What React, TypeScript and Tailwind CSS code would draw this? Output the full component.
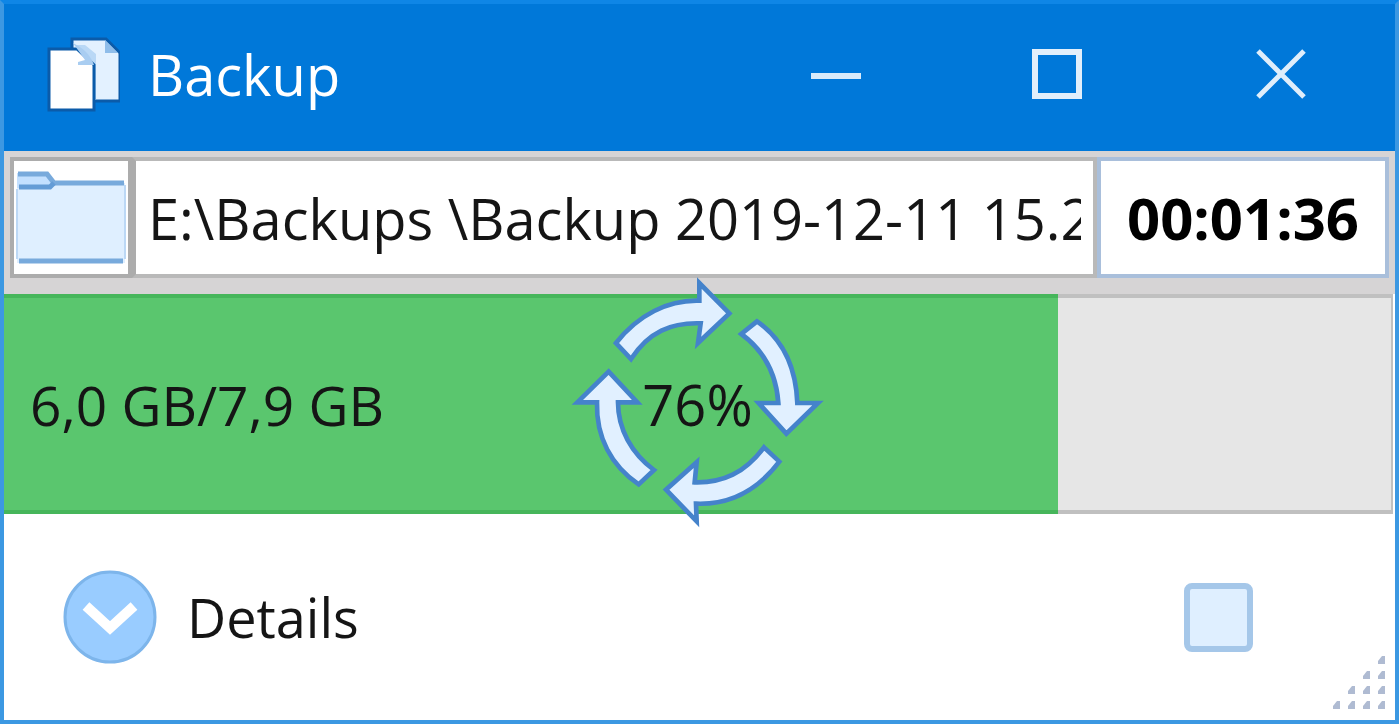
import React, { useState } from 'react';

const DONE_PERCENT = 76;

const CopyIcon: React.FC = () => (
  <svg className="w-[76px] h-20 shrink-0" viewBox="0 0 76 80" aria-hidden="true">
    <path d="M28 5H62L76 19V67H28Z" fill="#e3f1ff" stroke="#0b5ba9" strokeWidth="3" />
    <path d="M61 6V19H74Z" fill="#8fbdea" />
    <path d="M46 24V66H52V20L41 11H32Z" fill="#b9d8f6" />
    <path d="M5 15H33L50 31V76H5Z" fill="#fff" stroke="#0b5ba9" strokeWidth="3" />
    <path d="M29 9C39 14 46 20 50 31H34V28L41 26Z" fill="#a9cdf1" />
  </svg>
);

const FolderIcon: React.FC = () => (
  <svg className="w-[110px] h-[98px]" viewBox="0 0 110 98" aria-hidden="true">
    <path d="M1 4H32L40 14H109V94H1Z" fill="#dfefff" />
    <path d="M1 4H32L38 13L34 19H1Z" fill="#c3e0ff" />
    <path d="M2 5H31L38 14H108" fill="none" stroke="#78aadc" strokeWidth="5" />
    <path d="M3 18H34L38 14" fill="none" stroke="#649cd6" strokeWidth="5" />
    <path d="M3 92H107" stroke="#78aadc" strokeWidth="5" />
    <path d="M1 20V90M109 16V90" stroke="#bcd8f5" strokeWidth="2" />
  </svg>
);

const CycleArrows: React.FC = () => (
  <svg className="w-[280px] h-[270px]" viewBox="0 0 840 810" aria-hidden="true">
    <g fill="#e1f0ff" stroke="#4583cb" strokeWidth="14">
      <path d="M174 222C240 138 330 92 424 95L424 42L514 133L420 222L428 163C340 160 272 188 219 270Z" />
      <path d="M597 157L550 195C618 245 655 315 661 402H602L685 494L780 402H718C714 300 680 215 597 157Z" />
      <path d="M618 535L664 578C600 662 515 708 414 704L416 757L324 662L416 580L410 640C495 642 560 612 618 535Z" />
      <path d="M288 603L242 646C160 590 114 505 117 400H58L152 308L238 400H180C180 480 220 552 288 603Z" />
    </g>
  </svg>
);

const SizeGrip: React.FC = () => {
  const dots = [[3, 0], [2, 1], [3, 1], [1, 2], [2, 2], [3, 2], [0, 3], [1, 3], [2, 3], [3, 3]];
  return (
    <svg className="w-[54px] h-14" viewBox="0 0 54 56" aria-hidden="true">
      {dots.map(([col, row]) => (
        <path
          key={`${col}-${row}`}
          d="M4 0H7V8H0V5Z"
          fill="#afbbd2"
          transform={`translate(${col * 15} ${row * 15})`}
        />
      ))}
    </svg>
  );
};

const TitleBar: React.FC = () => (
  <header className="flex items-center h-[147px] pl-10 pb-2 bg-[#0078d9]">
    <CopyIcon />
    <h1 className="flex-1 pl-7 text-[56px] leading-none text-white">Backup</h1>
    <button type="button" aria-label="Minimize" className="flex justify-center w-[222px] py-10">
      <svg className="w-[50px] h-[50px]" viewBox="0 0 50 50">
        <path d="M0 27H50" stroke="#d9ebfa" strokeWidth="6" />
      </svg>
    </button>
    <button type="button" aria-label="Maximize" className="flex justify-center w-[220px] py-10">
      <svg className="w-[50px] h-[50px]" viewBox="0 0 50 50">
        <rect x="3" y="3" width="44" height="44" fill="none" stroke="#e2effb" strokeWidth="6" />
      </svg>
    </button>
    <button type="button" aria-label="Close" className="flex justify-center w-[228px] py-10">
      <svg className="w-[50px] h-[50px]" viewBox="0 0 50 50">
        <path d="M2 2L48 48M48 2L2 48" stroke="#dfeefb" strokeWidth="5" />
      </svg>
    </button>
  </header>
);

export default function App() {
  const [path, setPath] = useState('E:\\Backups \\Backup 2019-12-11 15.2');
  const [open, setOpen] = useState(false);

  return (
    <div className="flex flex-col min-h-screen border-4 border-[#3c98e2] border-t-[#0f86e6] bg-white font-['Open_Sans','Noto_Sans',sans-serif] text-[#151515]">
      <TitleBar />

      {/* Target folder and elapsed time */}
      <div className="flex h-[143px] pt-1.5 pb-4 px-1.5 bg-[#d6d4d5]">
        <button
          type="button"
          aria-label="Open folder"
          className="flex items-center justify-center w-[122px] border-4 border-[#acacac] bg-white"
        >
          <FolderIcon />
        </button>
        <input
          type="text"
          aria-label="Backup folder"
          value={path}
          onChange={(e) => setPath(e.target.value)}
          className="flex-1 min-w-0 px-3 border-4 border-l-[#acacac] border-[#b9b9b9] bg-white text-[56px] outline-none"
        />
        <time className="flex items-center justify-center w-[292px] border-4 border-[#a9bfdb] bg-white text-[58px] font-bold text-black">
          00:01:36
        </time>
      </div>

      {/* Progress */}
      <div
        role="progressbar"
        aria-label="Backup progress"
        aria-valuenow={DONE_PERCENT}
        className="relative flex items-center h-[220px] mr-0.5 bg-[#e6e6e6] border-y-4 border-r-2 border-[#c0c0c0]"
      >
        <div
          className="absolute -inset-y-1 left-0 bg-[#5ac66e] border-y-4 border-[#46b65b]"
          style={{ width: `${DONE_PERCENT}%` }}
        />
        <span className="relative pl-[26px] text-[55px] leading-none">6,0 GB/7,9 GB</span>
        <span className="absolute inset-0 flex items-center justify-center text-[56px] leading-none">
          {DONE_PERCENT}%
        </span>
        <div className="absolute inset-0 z-10 flex items-center justify-center">
          <CycleArrows />
        </div>
      </div>

      <footer className="relative flex flex-1 items-center justify-between pl-[59px] pr-[142px] bg-white">
        <button
          type="button"
          aria-expanded={open}
          onClick={() => setOpen(!open)}
          className="flex items-center gap-7 text-[54px]"
        >
          <svg className="w-24 h-24" viewBox="0 0 96 96" aria-hidden="true">
            <circle cx="47" cy="48" r="45" fill="#99ccff" stroke="#7db5eb" strokeWidth="3" />
            <path d="M23 37L47 59L71 37" fill="none" stroke="#fff" strokeWidth="10" />
          </svg>
          Details
        </button>
        <button
          type="button"
          aria-label="Stop backup"
          className="w-[69px] h-[69px] rounded-lg border-[6px] border-[#a5c7e9] bg-[#dfefff]"
        />
        <div className="absolute right-2 bottom-2">
          <SizeGrip />
        </div>
      </footer>
    </div>
  );
}
